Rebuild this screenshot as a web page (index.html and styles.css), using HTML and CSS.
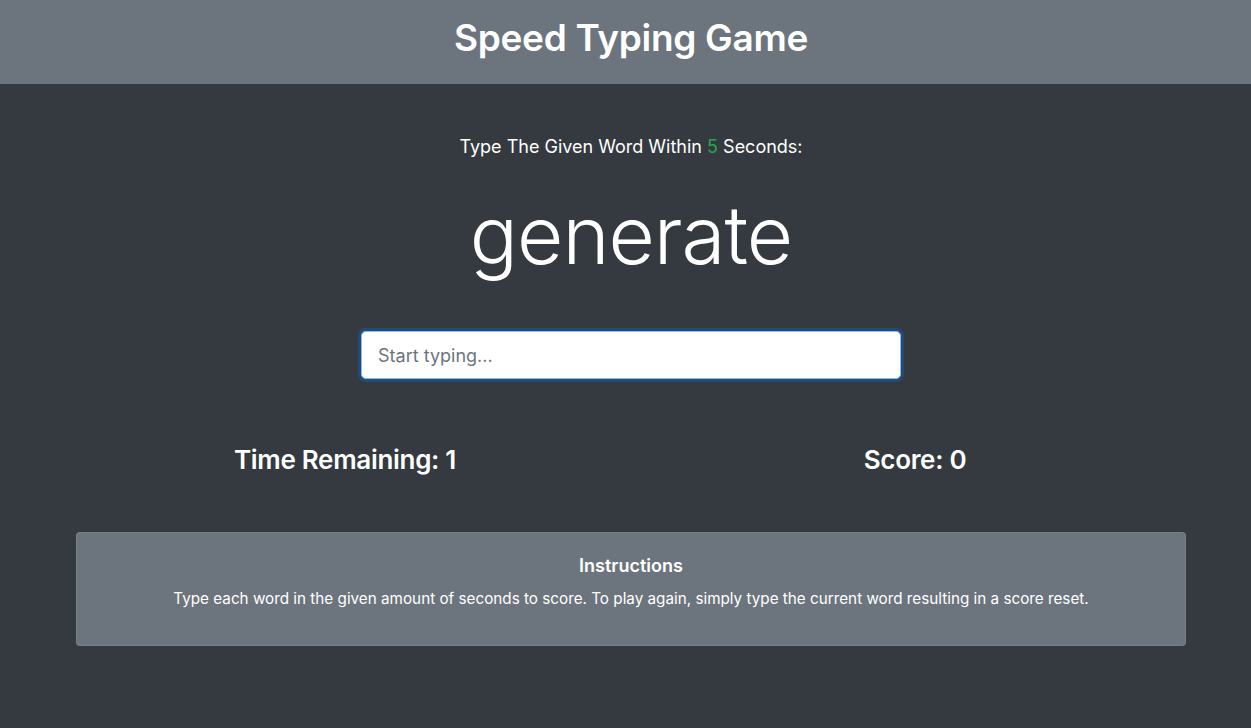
FILE: index.html
```html
<!DOCTYPE html>
<html lang="en">
<head>
<meta charset="utf-8">
<title>Speed Typing Game</title>
<link rel="stylesheet" href="styles.css">
</head>
<body>
<header class="topbar">
  <h1 class="title">Speed Typing Game</h1>
</header>
<main class="main">
  <div class="container">
    <p class="lead">Type The Given Word Within <span class="secs">5</span> Seconds:</p>
    <h2 class="word">generate</h2>
    <div class="input-wrap">
      <input class="typing" type="text" placeholder="Start typing..." autofocus>
    </div>
    <div class="stats">
      <h3 class="stat stat-left">Time Remaining: <span>1</span></h3>
      <h3 class="stat stat-right">Score: <span>0</span></h3>
    </div>
    <div class="card">
      <h5 class="card-title">Instructions</h5>
      <p class="card-text">Type each word in the given amount of seconds to score. To play again, simply type the current word resulting in a score reset.</p>
    </div>
  </div>
</main>
</body>
</html>
```
FILE: styles.css
```css
* { box-sizing: border-box; }
html, body { height: 100%; }
body {
  margin: 0;
  background: #343a40;
  color: #fff;
  font-family: Inter, "Noto Sans", "Liberation Sans", sans-serif;
  font-size: 16px;
  line-height: 1.5;
}
.topbar {
  background: #6c757d;
  padding: 14px 0 22px 11px;
  text-align: center;
}
.title {
  margin: 0;
  font-size: 37px;
  font-weight: 600;
  line-height: 48px;
  letter-spacing: -0.3px;
}
.main {
  padding-left: 11px;
}
.container {
  width: 1110px;
  margin: 0 auto;
  text-align: center;
}
.lead {
  margin: 48px 0 0;
  font-size: 18px;
  font-weight: 400;
  line-height: 30px;
}
.secs { color: #28a745; }
.word {
  margin: 23px 0 0;
  font-size: 80px;
  font-weight: 300;
  line-height: 100px;
  letter-spacing: -1px;
}
.input-wrap {
  margin-top: 46px;
  display: flex;
  justify-content: center;
}
.typing {
  width: 540px;
  height: 48px;
  padding: 8px 16px;
  font-family: inherit;
  font-size: 18px;
  color: #495057;
  background: #fff;
  border: 1px solid #80bdff;
  border-radius: 4.8px;
  outline: none;
  box-shadow: 0 0 0 3px rgba(0, 123, 255, .25);
}
.typing::placeholder { color: #6c757d; }
.stats {
  display: grid;
  grid-template-columns: 1fr 1fr;
  margin-top: 64px;
}
.stat {
  margin: 0;
  font-size: 26px;
  font-weight: 600;
  line-height: 34px;
  letter-spacing: -0.3px;
}
.stat-left { padding-right: 17px; }
.stat-right { padding-left: 13px; }
.card {
  margin-top: 55px;
  background: #6c757d;
  border: 1px solid rgba(255,255,255,.08);
  border-radius: 4px;
  padding: 21px 20px 34px;
}
.card-title {
  margin: 0 0 9px;
  font-size: 18px;
  font-weight: 600;
  line-height: 24px;
}
.card-text {
  margin: 0;
  font-size: 15.25px;
  line-height: 24px;
}
```
